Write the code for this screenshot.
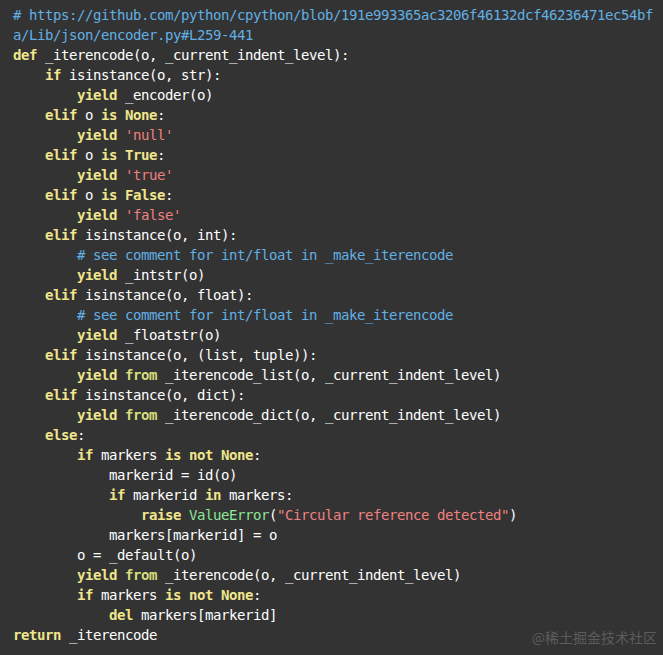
import React from 'react';

const code = `# https://github.com/python/cpython/blob/191e993365ac3206f46132dcf46236471ec54bf
a/Lib/json/encoder.py#L259-441
def _iterencode(o, _current_indent_level):
    if isinstance(o, str):
        yield _encoder(o)
    elif o is None:
        yield 'null'
    elif o is True:
        yield 'true'
    elif o is False:
        yield 'false'
    elif isinstance(o, int):
        # see comment for int/float in _make_iterencode
        yield _intstr(o)
    elif isinstance(o, float):
        # see comment for int/float in _make_iterencode
        yield _floatstr(o)
    elif isinstance(o, (list, tuple)):
        yield from _iterencode_list(o, _current_indent_level)
    elif isinstance(o, dict):
        yield from _iterencode_dict(o, _current_indent_level)
    else:
        if markers is not None:
            markerid = id(o)
            if markerid in markers:
                raise ValueError("Circular reference detected")
            markers[markerid] = o
        o = _default(o)
        yield from _iterencode(o, _current_indent_level)
        if markers is not None:
            del markers[markerid]
return _iterencode`;

const keywords = new Set([
  'def', 'if', 'elif', 'else', 'yield', 'from', 'return', 'raise', 'del',
  'is', 'not', 'in', 'None', 'True', 'False',
]);
const builtins = new Set(['ValueError']);

// tiny python highlighter, good enough for this snippet
function highlight(line: string, lineIdx: number) {
  // second line is the wrapped tail of the url comment
  if (lineIdx === 1) return [<span key="c" className="text-[#62afe3]">{line}</span>];
  const out: React.ReactNode[] = [];
  const re = /(#.*$)|('[^']*'|"[^"]*")|([A-Za-z_]\w*)|(\s+)|(.)/g;
  let m: RegExpExecArray | null;
  let i = 0;
  while ((m = re.exec(line))) {
    const [tok, comment, str, word] = m;
    if (comment) {
      out.push(<span key={i++} className="text-[#62afe3]">{tok}</span>);
    } else if (str) {
      out.push(<span key={i++} className="text-[#f08080]">{tok}</span>);
    } else if (word && keywords.has(word)) {
      out.push(
        <span key={i++} className={word === 'from' ? 'font-bold text-[#d8dc7c]' : 'font-bold text-[#f0e68c]'}>
          {tok}
        </span>,
      );
    } else if (word && builtins.has(word)) {
      out.push(<span key={i++} className="text-[#8ee69a]">{tok}</span>);
    } else {
      out.push(<span key={i++}>{tok}</span>);
    }
  }
  return out;
}

export default function App() {
  const lines = code.split('\n');
  return (
    <div className="relative w-[663px] h-[655px] bg-[#333333] overflow-hidden">
      <pre
        className="pl-[13px] pt-[5px] text-white text-[14px] leading-[20px] tracking-[-0.43px] whitespace-pre"
        style={{ fontFamily: '"DejaVu Sans Mono", "Liberation Mono", monospace' }}
      >
        {lines.map((l, idx) => (
          <div key={idx} className="h-[20px]">
            {highlight(l, idx)}
          </div>
        ))}
      </pre>
      <div
        className="absolute right-[6px] bottom-[8px] text-[14px] leading-[20px] text-[#5c5c5c]"
        style={{ fontFamily: '"Noto Sans CJK SC", "Noto Sans", sans-serif' }}
      >
        @稀土掘金技术社区
      </div>
    </div>
  );
}
